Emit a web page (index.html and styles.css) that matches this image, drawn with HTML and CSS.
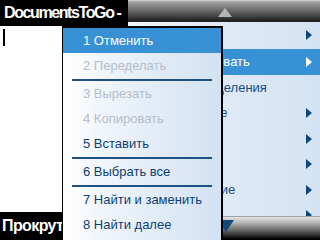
FILE: index.html
```html
<!DOCTYPE html>
<html lang="ru">
<head>
<meta charset="utf-8">
<title>DocumentsToGo</title>
<link rel="stylesheet" href="styles.css">
</head>
<body>
<div class="screen">
  <header class="titlebar"><span class="title">DocumentsToGo -</span></header>
  <main class="doc"><span class="cursor"></span></main>
  <footer class="softkeys"><span class="softkey">Прокрутка</span></footer>

  <nav class="menu">
    <div class="scroll scroll-up">
      <svg class="scroll-icon" width="16" height="10" viewBox="0 0 16 10"><polygon points="8,0 15,9 1,9" fill="#b4b4b4"/></svg>
    </div>
    <ul class="menu-list">
      <li class="mi first"><span>Файл</span><i class="arrow"></i></li>
      <li class="mi active"><span>Редактировать</span><i class="arrow"></i></li>
      <li class="mi"><span>Снять выделения</span></li>
      <li class="mi"><span>Изменение</span><i class="arrow"></i></li>
      <li class="mi"><span>Вид</span><i class="arrow"></i></li>
      <li class="mi"><span>Сервис</span><i class="arrow"></i></li>
      <li class="mi"><span>Примечание</span><i class="arrow"></i></li>
      <li class="mi"><span>Окно</span><i class="arrow"></i></li>
    </ul>
    <div class="scroll scroll-down">
      <svg class="scroll-icon down" width="18" height="13" viewBox="0 0 18 13"><polygon points="1,0 17,0 9,12" fill="#14477c"/></svg>
    </div>
  </nav>

  <div class="submenu">
    <ul class="sub-list">
      <li class="si active">1 Отменить</li>
      <li class="si disabled">2 Переделать</li>
      <li class="sep"></li>
      <li class="si disabled">3 Вырезать</li>
      <li class="si disabled">4 Копировать</li>
      <li class="si">5 Вставить</li>
      <li class="sep"></li>
      <li class="si">6 Выбрать все</li>
      <li class="sep"></li>
      <li class="si">7 Найти и заменить</li>
      <li class="si">8 Найти далее</li>
    </ul>
  </div>
</div>
</body>
</html>
```

FILE: styles.css
```css
html, body {
  margin: 0;
  padding: 0;
  background: #fff;
}

body {
  width: 320px;
  height: 240px;
  overflow: hidden;
  font-family: "Liberation Sans", Arial, sans-serif;
}

ul {
  list-style: none;
  margin: 0;
  padding: 0;
}

.screen {
  position: relative;
  width: 320px;
  height: 240px;
  display: flex;
  flex-direction: column;
  overflow: hidden;
}

.titlebar {
  height: 26px;
  background: #000;
  color: #fff;
  padding-left: 4px;
  flex: none;
}

.title {
  font-weight: bold;
  font-size: 16px;
  line-height: 26px;
  letter-spacing: -1.4px;
  white-space: nowrap;
}

.doc {
  flex: 1;
  background: #fff;
  padding: 3px 0 0 3px;
}

.cursor {
  display: block;
  width: 2px;
  height: 17px;
  background: #000;
}

.softkeys {
  height: 28px;
  background: #000;
  color: #fff;
  padding-left: 2px;
  flex: none;
}

.softkey {
  font-weight: bold;
  font-size: 16px;
  line-height: 28px;
  letter-spacing: -0.6px;
}

/* parent menu */
.menu {
  position: absolute;
  left: 128px;
  top: 0;
  width: 192px;
  height: 240px;
  display: flex;
  flex-direction: column;
  background: linear-gradient(to right, #f0f5fb 0%, #dde8f5 60%, #d4e3f3 100%);
}

.scroll {
  flex: none;
  display: flex;
  justify-content: center;
}

.scroll-up {
  height: 22px;
  align-items: flex-start;
  background: linear-gradient(to bottom, #dcdcdc 0px, #a0a0a0 2px, #7a7a7a 8px, #3c3c3c 17px, #1e1e1e 21px, #2a2a2a 22px);
}

.scroll-up .scroll-icon {
  margin-top: 8px;
  margin-left: 1px;
}

.scroll-down {
  height: 23px;
  align-items: flex-start;
  border-top: 1px solid #a6a6a6;
  background: linear-gradient(to bottom, #e2e2e2 0px, #bdbdbd 5px, #6a6a6a 13px, #1a1a1a 20px, #000 22px);
}

.scroll-down .scroll-icon {
  margin-top: 3px;
  margin-left: 4px;
}

.menu-list {
  flex: 1;
  overflow: hidden;
}

.mi {
  height: 25.6px;
  display: flex;
  align-items: center;
  justify-content: space-between;
  padding: 0 8px 0 32px;
  font-size: 13px;
  color: #134c8a;
  white-space: nowrap;
}

.mi.first {
  height: 25px;
  margin-bottom: 2px;
}

.mi.active {
  background: #3891d4;
  color: #fff;
}

.arrow {
  width: 0;
  height: 0;
  border-top: 5px solid transparent;
  border-bottom: 5px solid transparent;
  border-left: 6px solid #0e477f;
}

.mi.active .arrow {
  border-left-color: #fff;
}

/* submenu */
.submenu {
  position: absolute;
  left: 62px;
  top: 26px;
  bottom: 0;
  width: 158px;
  border-top: 2px solid #000;
  border-left: 1px solid #000;
  border-right: 2px solid #000;
  background: linear-gradient(to right, #ffffff 0%, #f0f5fb 25%, #dfeaf6 65%, #d2e2f3 100%);
}

.si {
  height: 25px;
  line-height: 25px;
  padding-left: 20px;
  font-size: 13px;
  color: #0d3f74;
  white-space: nowrap;
}

.si.disabled {
  color: #b5bec8;
}

.si.active {
  background: #3891d4;
  color: #fff;
}

.sep {
  height: 2px;
  margin: 1px 9px 0 9px;
  background: #1f5183;
}
```
